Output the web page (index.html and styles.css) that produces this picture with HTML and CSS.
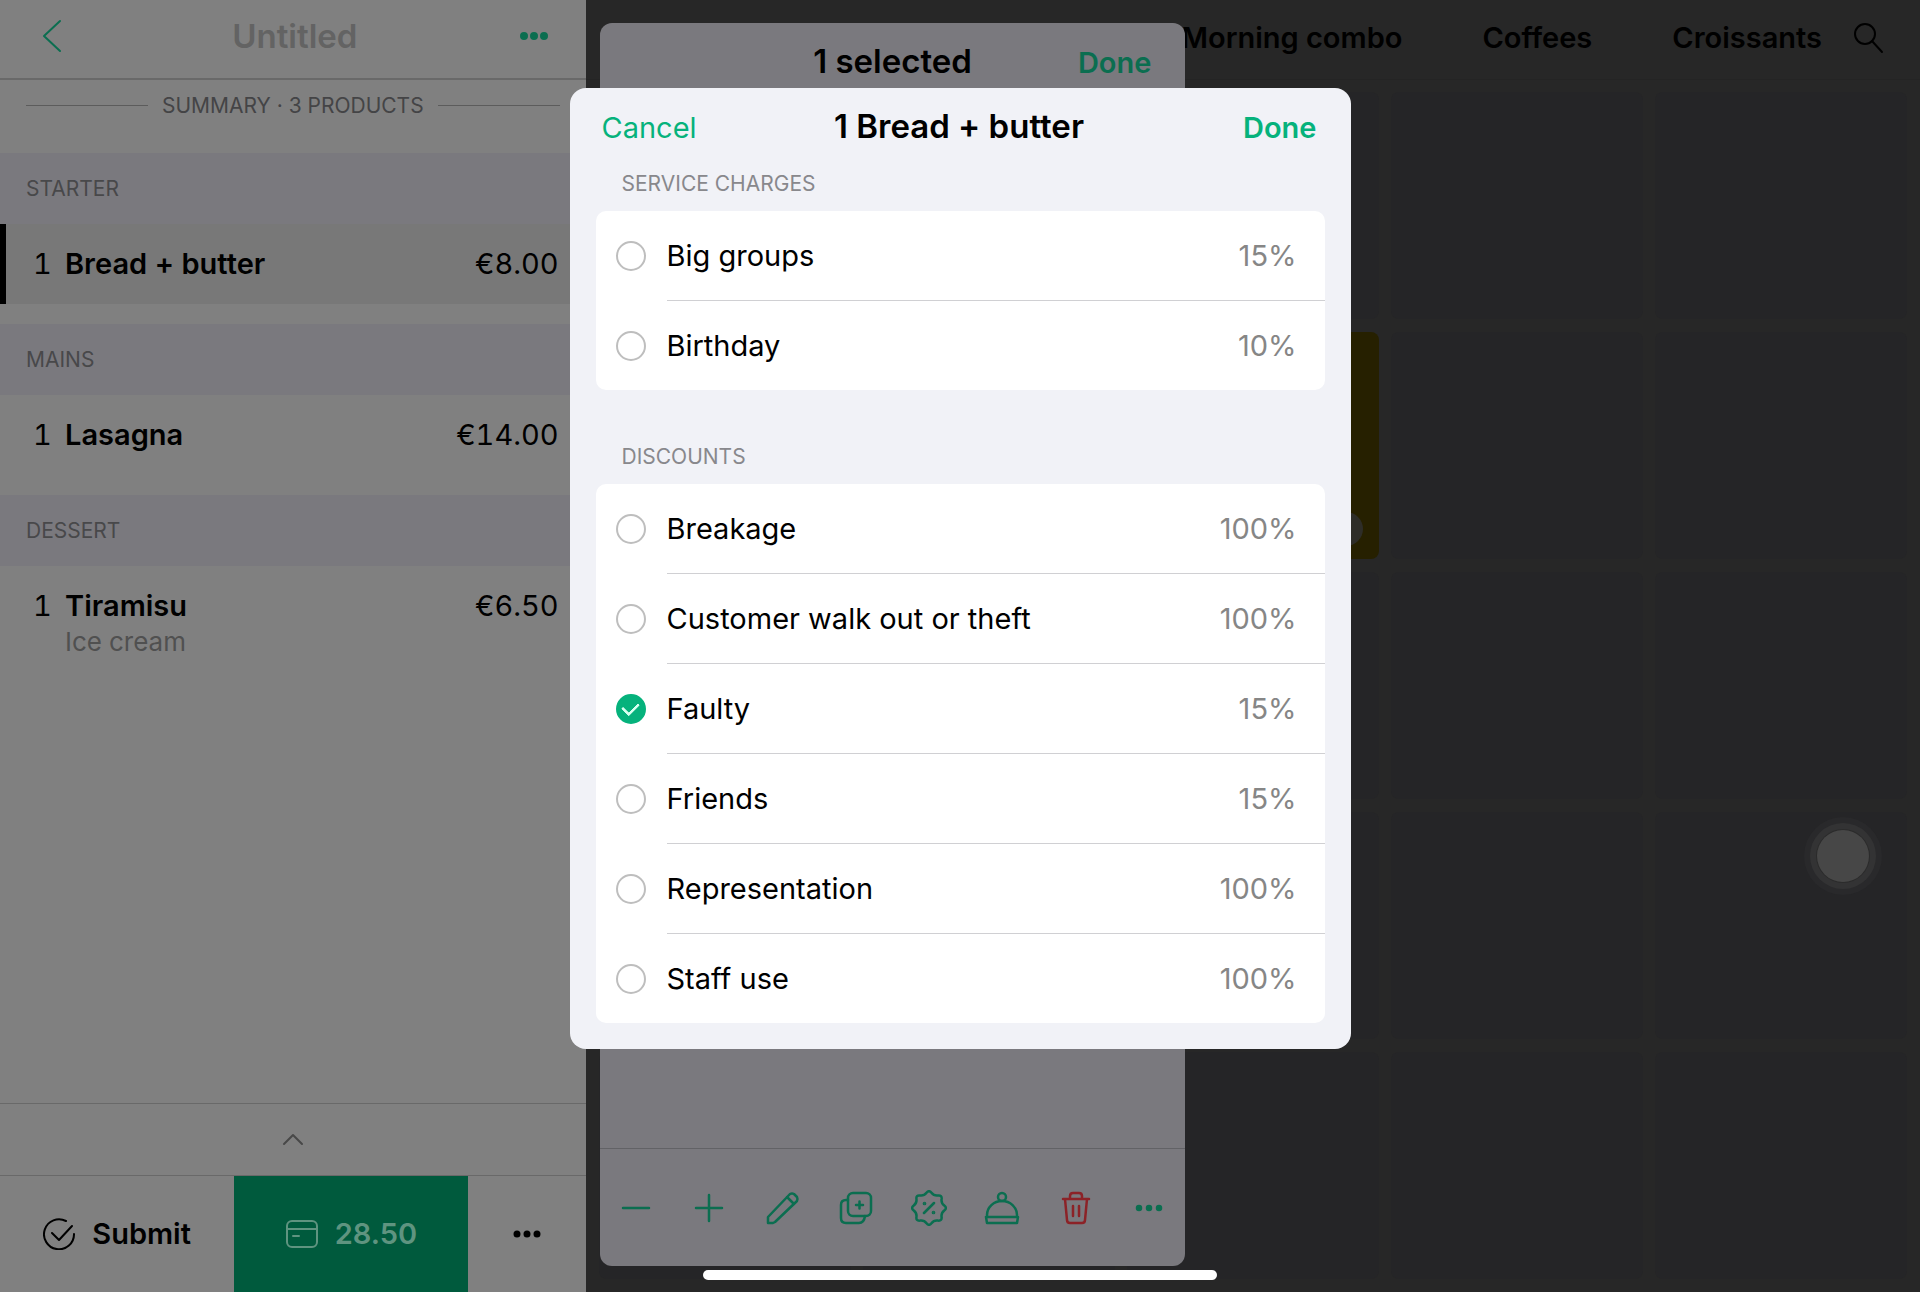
FILE: index.html
```html
<!DOCTYPE html>
<html lang="en">
<head>
    <meta charset="UTF-8">
    <meta name="viewport" content="width=device-width, initial-scale=1.0">
    <title>Order</title>
    <link rel="stylesheet" href="styles.css">
</head>
<body>
    <div class="app">
        <aside class="order">
            <header class="order-header">
                <button class="icon-btn back" aria-label="Back">
                    <svg width="28" height="34" viewBox="0 0 28 34"><path d="M18 2 2 17l16 15"/></svg>
                </button>
                <h1>Untitled</h1>
                <button class="icon-btn more" aria-label="More">
                    <svg class="dots" width="28" height="8" viewBox="0 0 28 8"><circle cx="4" cy="4" r="3"/><circle cx="14" cy="4" r="3"/><circle cx="24" cy="4" r="3"/></svg>
                </button>
            </header>

            <div class="summary">SUMMARY · 3 PRODUCTS</div>

            <h2 class="course">STARTER</h2>
            <div class="item selected">
                <span class="qty">1</span>
                <span class="name">Bread + butter</span>
                <span class="price">€8.00</span>
            </div>

            <h2 class="course">MAINS</h2>
            <div class="item">
                <span class="qty">1</span>
                <span class="name">Lasagna</span>
                <span class="price">€14.00</span>
            </div>

            <h2 class="course">DESSERT</h2>
            <div class="item">
                <span class="qty">1</span>
                <span class="name">Tiramisu</span>
                <span class="price">€6.50</span>
                <span class="note">Ice cream</span>
            </div>

            <button class="expand" aria-label="Show totals">
                <svg width="22" height="14" viewBox="0 0 22 14"><path d="m2 11 9-9 9 9"/></svg>
            </button>
            <footer class="order-footer">
                <button class="submit">
                    <svg width="32" height="32" viewBox="0 0 32 32"><path d="M23 3A15 15 0 1 0 31 16M9 15l7 7L29 8"/></svg>
                    Submit
                </button>
                <button class="pay">
                    <svg width="32" height="28" viewBox="0 0 32 28"><rect x="1" y="1" width="30" height="26" rx="5"/><path d="M1 9h30M7 16h6"/></svg>
                    28.50
                </button>
                <button class="options" aria-label="Options">
                    <svg class="dots" width="28" height="8" viewBox="0 0 28 8"><circle cx="4" cy="4" r="2.500"/><circle cx="14" cy="4" r="2.500"/><circle cx="24" cy="4" r="2.500"/></svg>
                </button>
            </footer>
        </aside>

        <main class="menu">
            <nav class="tabs">
                <a href="#">Morning combo</a>
                <a href="#">Coffees</a>
                <a href="#">Croissants</a>
                <button class="icon-btn search" aria-label="Search">
                    <svg width="32" height="32" viewBox="0 0 32 32"><circle cx="13" cy="12" r="10"/><path d="m20 19 10 11"/></svg>
                </button>
            </nav>
            <div class="tiles">
                <div class="tile"></div><div class="tile"></div><div class="tile"></div><div class="tile"></div><div class="tile"></div>
                <div class="tile"></div><div class="tile"></div><div class="tile yellow"><span class="count"></span></div><div class="tile"></div><div class="tile"></div>
                <div class="tile"></div><div class="tile"></div><div class="tile"></div><div class="tile"></div><div class="tile"></div>
                <div class="tile"></div><div class="tile"></div><div class="tile"></div><div class="tile"></div><div class="tile"></div>
                <div class="tile"></div><div class="tile"></div><div class="tile"></div><div class="tile"></div><div class="tile"></div>
            </div>

            <section class="sheet">
                <header class="sheet-header">
                    <h2>1 selected</h2>
                    <button class="done">Done</button>
                </header>
                <div class="toolbar">
                    <button aria-label="Decrease"><svg width="36" height="36" viewBox="0 0 36 36"><path d="M5 18h26"/></svg></button>
                    <button aria-label="Increase"><svg width="36" height="36" viewBox="0 0 36 36"><path d="M5 18h26M18 5v26"/></svg></button>
                    <button aria-label="Edit"><svg width="36" height="36" viewBox="0 0 36 36"><path d="M3 33v-6L25 4q2-1 4 0l3 3q1 2 0 4L10 32l-2 1ZM22 7l7 7"/></svg></button>
                    <button aria-label="Duplicate"><svg width="36" height="36" viewBox="0 0 36 36"><rect x="10" y="3" width="23" height="23" rx="5"/><path d="M10 10H8q-5 0-5 5v13q0 5 5 5h13q5 0 6-7M21.500 11.500v7M18 15h7"/></svg></button>
                    <button aria-label="Discount"><svg width="36" height="36" viewBox="-1 -1 36 36"><path d="M14.500 1.750Q17-1.500 19.500 1.750Q22 5 26 4.450Q30.100 3.900 29.600 8Q29 12 32.250 14.500Q35.500 17 32.250 19.500Q29 22 29.600 26Q30.100 30.100 26 29.600Q22 29 19.500 32.250Q17 35.500 14.500 32.250Q12 29 8 29.600Q3.900 30.100 4.450 26Q5 22 1.750 19.500Q-1.500 17 1.750 14.500Q5 12 4.450 8Q3.900 3.900 8 4.450Q12 5 14.500 1.750ZM22 12 12 22"/><circle class="fill" cx="12.500" cy="12.500" r=".6"/><circle class="fill" cx="21.500" cy="21.500" r=".6"/></svg></button>
                    <button aria-label="Serve"><svg width="36" height="36" viewBox="0 0 36 36"><path d="M3 27v-2a15 14 0 0 1 30 0v2M2 27h32l-1 6H3Z"/><circle cx="18" cy="7" r="4"/></svg></button>
                    <button class="danger" aria-label="Delete"><svg width="36" height="36" viewBox="0 0 36 36"><path d="M5 9h26M12 9V6q0-3 3-3h6q3 0 3 3v3M7 9l2 21q0 3 3 3h12q3 0 3-3l2-21M15 16v10M21 16v10"/></svg></button>
                    <button aria-label="More actions"><svg class="dots" width="28" height="8" viewBox="0 0 28 8"><circle cx="4" cy="4" r="2"/><circle cx="14" cy="4" r="2"/><circle cx="24" cy="4" r="2"/></svg></button>
                </div>
            </section>
        </main>
    </div>

    <div class="overlay">
        <form class="modal" role="dialog" aria-labelledby="modal-title">
            <header class="modal-header">
                <button type="button" class="cancel">Cancel</button>
                <h2 id="modal-title">1 Bread + butter</h2>
                <button type="button" class="done">Done</button>
            </header>

            <h3>SERVICE CHARGES</h3>
            <div class="card">
                <label><input type="checkbox"><span class="option">Big groups <span class="value">15%</span></span></label>
                <label><input type="checkbox"><span class="option">Birthday <span class="value">10%</span></span></label>
            </div>

            <h3>DISCOUNTS</h3>
            <div class="card">
                <label><input type="checkbox"><span class="option">Breakage <span class="value">100%</span></span></label>
                <label><input type="checkbox"><span class="option">Customer walk out or theft <span class="value">100%</span></span></label>
                <label><input type="checkbox" checked><span class="option">Faulty <span class="value">15%</span></span></label>
                <label><input type="checkbox"><span class="option">Friends <span class="value">15%</span></span></label>
                <label><input type="checkbox"><span class="option">Representation <span class="value">100%</span></span></label>
                <label><input type="checkbox"><span class="option">Staff use <span class="value">100%</span></span></label>
            </div>
        </form>
    </div>

    <button class="assistive" aria-label="Assistive touch"></button>
    <div class="home-bar"></div>
</body>
</html>
```

FILE: styles.css
```css
* {
    box-sizing: border-box;
}

:root {
    --green: #06b27c;
    --green-dim: #0b6e50;
    --panel: #808080;
    --band: #7a797e;
    --line: #696969;
}

body {
    margin: 0;
    font-family: Inter, sans-serif;
    font-size: 29px;
    line-height: 36px;
    color: #000;
    background: #272727;
}

h1, h2, h3 {
    margin: 0;
    font-weight: 600;
}

button {
    display: flex;
    align-items: center;
    justify-content: center;
    padding: 0;
    border: none;
    background: none;
    font: inherit;
    color: inherit;
    cursor: pointer;
}

svg {
    display: block;
    flex: none;
    fill: none;
    stroke: currentColor;
    stroke-width: 2;
    stroke-linecap: round;
    stroke-linejoin: round;
}

.dots, .fill {
    fill: currentColor;
}

.app {
    display: flex;
    height: 100vh;
}

/* order panel */
.order {
    display: flex;
    flex-direction: column;
    width: 30.5%;
    background: var(--panel);
}

.order-header {
    display: flex;
    align-items: center;
    justify-content: space-between;
    height: 80px;
    padding: 0 38px 6px 42px;
    border-bottom: 2px solid var(--line);
}

.order-header h1 {
    font-size: 33px;
    color: #636363;
}

.back, .order-header .more {
    color: var(--green-dim);
}

.summary {
    display: flex;
    align-items: center;
    gap: 14px;
    height: 73px;
    padding: 0 26px 22px;
    font-size: 21px;
    color: #444446;
}

.summary::before, .summary::after {
    content: "";
    flex: 1;
    height: 1px;
    background: #5c5c5c;
}

.course {
    height: 71px;
    padding: 0 26px;
    font-size: 21px;
    font-weight: 400;
    line-height: 71px;
    color: #48484a;
    background: var(--band);
}

.item {
    display: grid;
    grid-template-columns: 32px 1fr auto;
    align-content: start;
    min-height: 100px;
    padding: 22px 27px 20px 33px;
    font-variant-numeric: tabular-nums;
}

.item.selected {
    min-height: 80px;
    margin-bottom: 20px;
    padding-left: 27px;
    border-left: 6px solid #000;
    background: #787878;
}

.name {
    font-weight: 600;
}

.note {
    grid-column: 2;
    font-size: 26px;
    color: #505050;
}

.expand {
    height: 72px;
    margin-top: auto;
    border-top: 1px solid var(--line);
    color: #484848;
}

.order-footer {
    display: grid;
    grid-template-columns: 2fr 2fr 1fr;
    height: 117px;
    border-top: 1px solid var(--line);
    font-weight: 600;
}

.submit, .pay {
    gap: 17px;
}

.pay {
    color: #5f9480;
    background: #005a3d;
}

/* products */
.menu {
    position: relative;
    flex: 1;
    display: flex;
    flex-direction: column;
    overflow: hidden;
}

.tabs {
    display: flex;
    align-items: center;
    justify-content: flex-end;
    gap: 80px;
    height: 80px;
    padding: 0 36px 3px;
    border-bottom: 1px solid #242424;
    font-weight: 600;
}

.tabs a {
    color: #000;
    text-decoration: none;
    white-space: nowrap;
}

.search {
    margin-left: -50px;
}

.tiles {
    display: grid;
    grid-template-columns: repeat(5, 1fr);
    grid-auto-rows: 227px;
    gap: 13px 12px;
    padding: 12px 13px;
}

.tile {
    border-radius: 8px;
    background: #252527;
}

.tile.yellow {
    display: flex;
    align-items: flex-end;
    justify-content: flex-end;
    padding: 13px 16px;
    background: #262000;
}

.count {
    width: 34px;
    height: 34px;
    border-radius: 50%;
    background: #2e2d28;
}

/* selection sheet, floats over the products */
.sheet {
    position: absolute;
    top: 23px;
    bottom: 26px;
    left: 14px;
    display: flex;
    flex-direction: column;
    justify-content: space-between;
    width: 43.9%;
    border-radius: 12px;
    background: var(--band);
}

.sheet-header, .modal-header {
    display: grid;
    grid-template-columns: 1fr auto 1fr;
    align-items: baseline;
    padding: 20px 34px 0;
}

.sheet-header h2, .modal-header h2 {
    grid-column: 2;
    font-size: 33px;
}

.done {
    justify-self: end;
    font-weight: 600;
    color: var(--green);
}

.cancel {
    justify-self: start;
    color: var(--green);
}

.sheet .done {
    color: var(--green-dim);
}

.toolbar {
    display: flex;
    height: 118px;
    border-top: 1px solid #626266;
    color: var(--green-dim);
}

.toolbar button {
    flex: 1;
}

.toolbar svg {
    stroke-width: 2.5;
}

.toolbar .danger {
    color: #8c2227;
}

/* modal */
.overlay {
    position: fixed;
    inset: 0;
    display: flex;
    align-items: flex-start;
    justify-content: center;
    padding-top: 88px;
}

.modal {
    width: 781px;
    max-width: 100%;
    padding: 0 26px 26px;
    border-radius: 16px;
    background: #f1f2f7;
}

.modal-header {
    height: 56px;
    padding: 20px 8px 0 6px;
}

.modal h3 {
    padding: 26px 26px 13px;
    font-size: 21px;
    font-weight: 400;
    line-height: 28px;
    color: #88888c;
}

.card + h3 {
    padding-top: 53px;
}

.card {
    border-radius: 10px;
    background: #fff;
    overflow: hidden;
}

.card label {
    display: flex;
    align-items: center;
    gap: 21px;
    padding-left: 20px;
}

.option {
    flex: 1;
    display: flex;
    justify-content: space-between;
    padding: 27px 28px 26px 0;
    border-bottom: 1px solid #d0d0d3;
}

.card label:last-child .option {
    border-bottom: none;
}

.value {
    color: #868686;
}

.card input {
    appearance: none;
    display: grid;
    place-items: center;
    width: 30px;
    height: 30px;
    margin: 0;
    border: 2px solid #bebebe;
    border-radius: 50%;
}

.card input:checked {
    border-color: var(--green);
    background: var(--green);
}

.card input:checked::after {
    content: "";
    width: 8px;
    height: 13px;
    margin-bottom: 4px;
    border: solid #d8fff0;
    border-width: 0 3px 3px 0;
    border-radius: 1px;
    transform: rotate(45deg);
}

.assistive {
    position: fixed;
    right: 51px;
    top: 830px;
    width: 52px;
    height: 52px;
    border-radius: 50%;
    background: #474747;
    box-shadow: 0 0 0 1px #2b2b2b, 0 0 0 7px #333334, 0 0 0 13px #29292b;
}

.home-bar {
    position: fixed;
    bottom: 12px;
    left: 50%;
    width: 514px;
    height: 10px;
    margin-left: -257px;
    border-radius: 5px;
    background: #fff;
}
```
